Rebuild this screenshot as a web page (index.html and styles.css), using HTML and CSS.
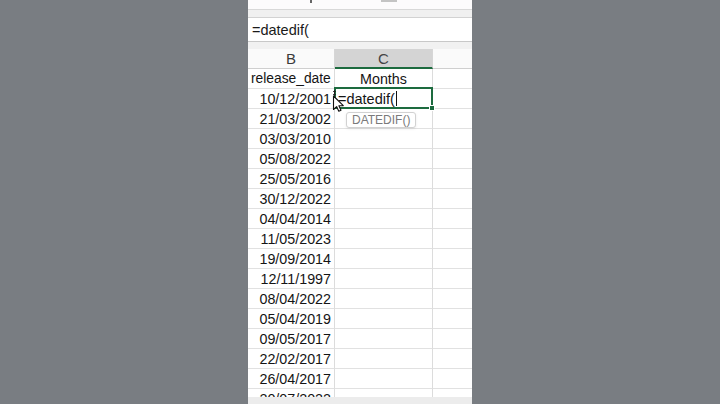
FILE: index.html
```html
<!DOCTYPE html>
<html>
<head>
<meta charset="utf-8">
<link rel="stylesheet" href="styles.css">
</head>
<body>
<div class="panel">
  <div class="toolbar"><span class="tick"></span><span class="tbox"></span></div>
  <div class="band"></div>
  <div class="formula">=datedif(</div>
  <div class="band2"></div>
  <div class="sheet">
    <div class="hdr">B</div><div class="hdr sel">C</div><div class="hdr last"></div>

    <div class="cell txt">release_date</div><div class="cell ctr">Months</div><div class="cell last"></div>

    <div class="cell num">10/12/2001</div>
    <div class="cell active"><span class="edit">=datedif(<span class="caret"></span></span><span class="handle"></span>
      <div class="tip">DATEDIF()</div>
      <svg class="pointer" width="16" height="22" viewBox="0 0 16 22"><path d="M2.5 0.5 L2.5 5.5 M1.2 1.9 L2.5 0.5 L3.8 1.9 M1.2 4.1 L2.5 5.5 L3.8 4.1" stroke="#222" stroke-width="1" fill="none"/><path d="M1.5 6 L1.5 19.5 L4.6 16.6 L6.8 21.2 L9 20.3 L6.9 15.8 L11.3 15.6 Z" fill="#fff" stroke="#111" stroke-width="1.1" stroke-linejoin="round"/></svg>
    </div>
    <div class="cell last"></div>

    <div class="cell num">21/03/2002</div><div class="cell"></div><div class="cell last"></div>
    <div class="cell num">03/03/2010</div><div class="cell"></div><div class="cell last"></div>
    <div class="cell num">05/08/2022</div><div class="cell"></div><div class="cell last"></div>
    <div class="cell num">25/05/2016</div><div class="cell"></div><div class="cell last"></div>
    <div class="cell num">30/12/2022</div><div class="cell"></div><div class="cell last"></div>
    <div class="cell num">04/04/2014</div><div class="cell"></div><div class="cell last"></div>
    <div class="cell num">11/05/2023</div><div class="cell"></div><div class="cell last"></div>
    <div class="cell num">19/09/2014</div><div class="cell"></div><div class="cell last"></div>
    <div class="cell num">12/11/1997</div><div class="cell"></div><div class="cell last"></div>
    <div class="cell num">08/04/2022</div><div class="cell"></div><div class="cell last"></div>
    <div class="cell num">05/04/2019</div><div class="cell"></div><div class="cell last"></div>
    <div class="cell num">09/05/2017</div><div class="cell"></div><div class="cell last"></div>
    <div class="cell num">22/02/2017</div><div class="cell"></div><div class="cell last"></div>
    <div class="cell num">26/04/2017</div><div class="cell"></div><div class="cell last"></div>
    <div class="cell num">20/07/2022</div><div class="cell"></div><div class="cell last"></div>
  </div>
  <div class="bottom"></div>
</div>
</body>
</html>
```

FILE: styles.css
```css
html, body {
  margin: 0;
  padding: 0;
  height: 100%;
}
body {
  background: #797d82;
  display: flex;
  justify-content: center;
  overflow: hidden;
  font-family: "Liberation Sans", Arial, sans-serif;
}
.panel {
  width: 224px;
  height: 404px;
  background: #fff;
  display: flex;
  flex-direction: column;
  overflow: hidden;
}
.toolbar {
  height: 9px;
  background: #fcfbfc;
  border-bottom: 1px solid #d8d8d8;
  display: flex;
  align-items: flex-start;
  flex-shrink: 0;
}
.tick {
  width: 2px;
  height: 3px;
  background: #666;
  margin-left: 62px;
}
.tbox {
  width: 16px;
  height: 2px;
  background: #c4c4c4;
  margin-left: 69px;
}
.band {
  height: 7px;
  background: #f0f0f0;
  border-bottom: 1px solid #d2d2d2;
  flex-shrink: 0;
}
.formula {
  height: 23px;
  line-height: 25px;
  padding-left: 4px;
  font-size: 14.5px;
  color: #1a1a1a;
  border-bottom: 1px solid #c8c8c8;
  flex-shrink: 0;
}
.band2 {
  height: 7px;
  background: #f1f1f1;
  flex-shrink: 0;
}
.sheet {
  flex: 1;
  overflow: hidden;
  display: grid;
  grid-template-columns: 87px 98px 1fr;
  grid-auto-rows: 20px;
}
.hdr {
  box-sizing: border-box;
  background: #fafafa;
  border-bottom: 1px solid #cfcfcf;
  border-right: 1px solid #d6d6d6;
  font-size: 15px;
  color: #3a3a3a;
  display: flex;
  align-items: center;
  justify-content: center;
}
.hdr.sel {
  background: #d4d4d4;
  border-bottom: 2px solid #1d6b3f;
  color: #444;
}
.hdr.last {
  border-right: none;
}
.cell {
  box-sizing: border-box;
  border-bottom: 1px solid #e1e1e1;
  border-right: 1px solid #dcdcdc;
  font-size: 14.3px;
  color: #151515;
  display: flex;
  align-items: center;
  padding: 0 3px;
  white-space: nowrap;
  position: relative;
}
.cell.last {
  border-right: none;
}
.num {
  justify-content: flex-end;
}
.txt {
  justify-content: flex-start;
  font-size: 13.8px;
}
.ctr {
  justify-content: center;
}
.active {
  overflow: visible;
  z-index: 2;
}
.active::before {
  content: "";
  position: absolute;
  left: -1px;
  top: -2px;
  right: -1px;
  bottom: -1px;
  border: 2px solid #1d6b3f;
}
.edit {
  font-size: 14.5px;
  position: relative;
  display: flex;
  align-items: center;
}
.caret {
  display: inline-block;
  width: 1px;
  height: 15px;
  background: #111;
  margin-left: 1px;
}
.handle {
  position: absolute;
  right: -3px;
  bottom: -3px;
  width: 4px;
  height: 4px;
  background: #1d6b3f;
  border: 1px solid #fff;
}
.tip {
  position: absolute;
  left: 11px;
  top: 23px;
  height: 16px;
  box-sizing: border-box;
  padding: 0 5px;
  border: 1px solid #d2d2d2;
  border-radius: 3px;
  background: #fff;
  font-size: 12px;
  line-height: 14px;
  color: #7a7a7a;
  box-shadow: 0 1px 3px rgba(0,0,0,0.08);
}
.pointer {
  position: absolute;
  left: -3px;
  top: 1px;
}
.bottom {
  height: 7px;
  background: #ececec;
  flex-shrink: 0;
}
```
